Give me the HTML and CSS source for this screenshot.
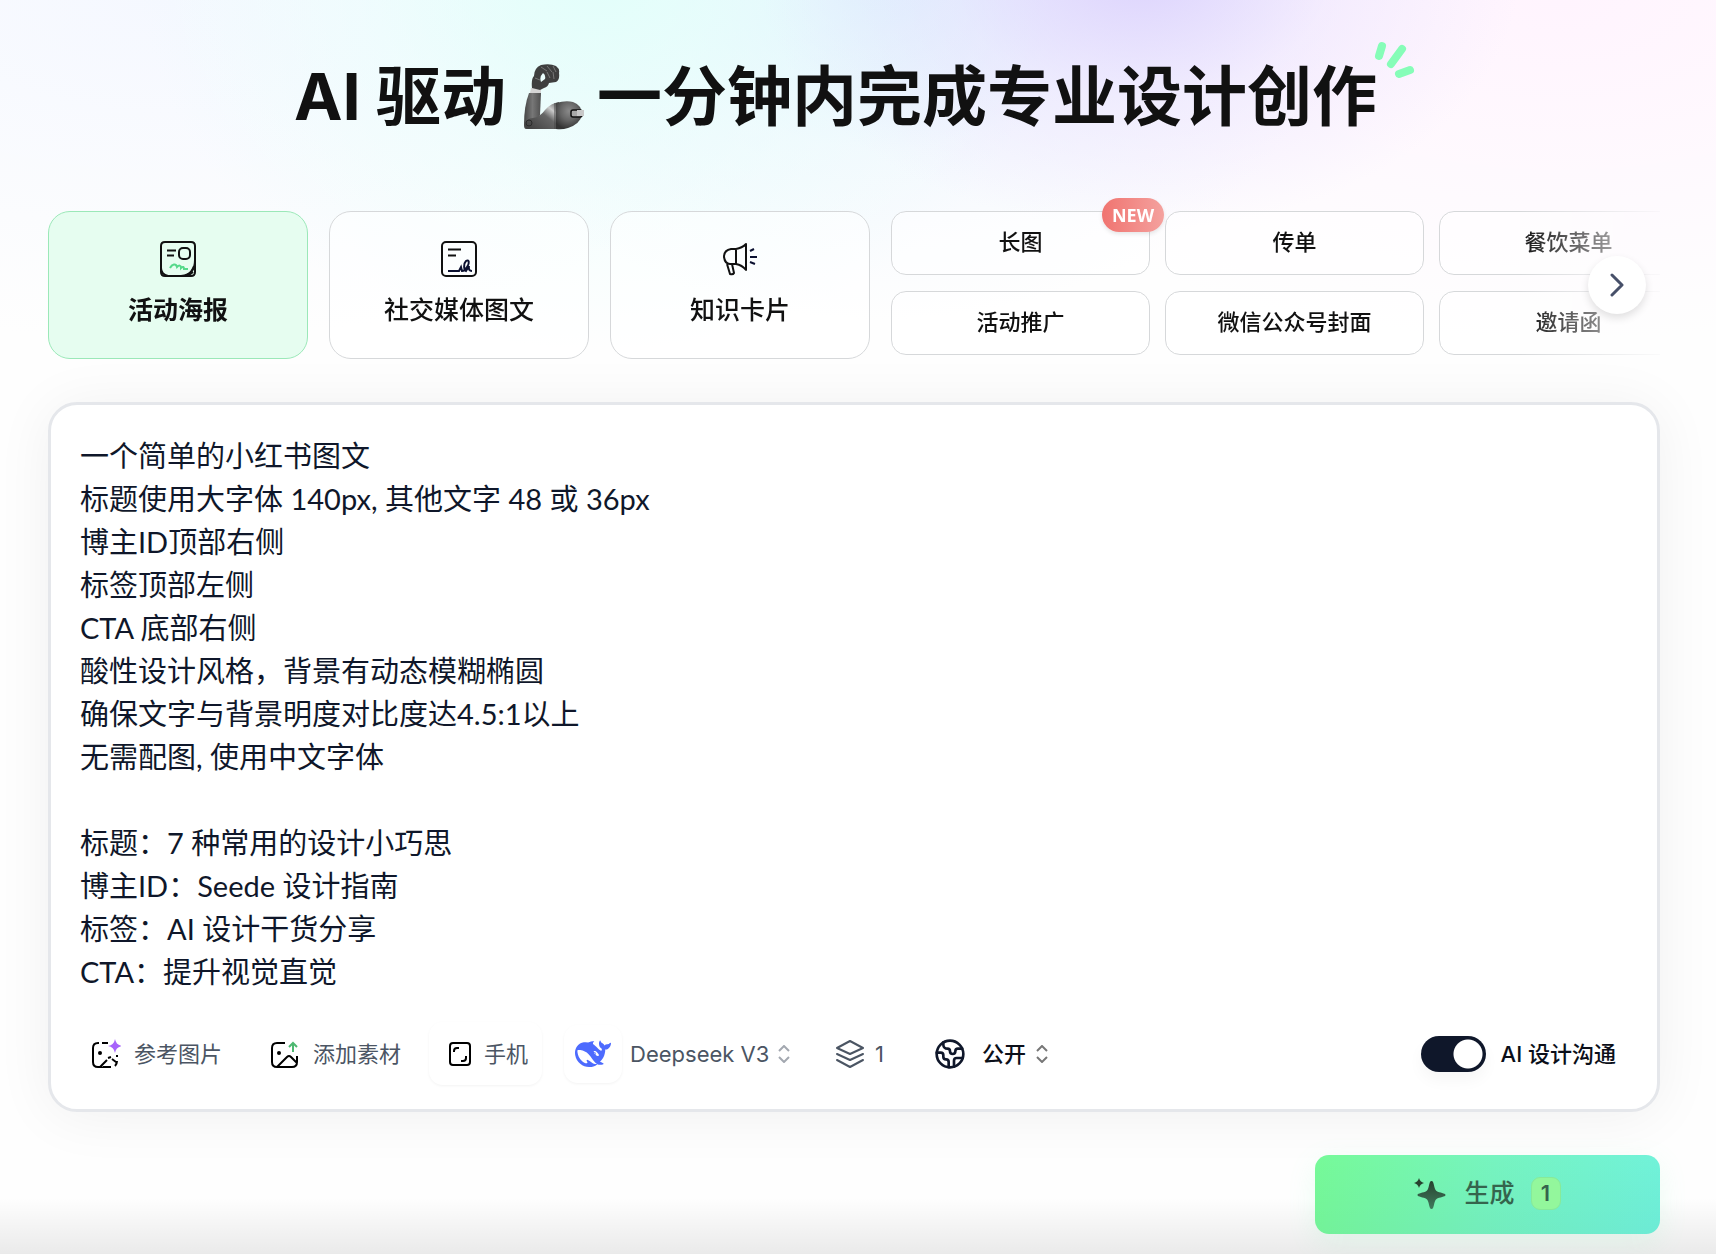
FILE: index.html
```html
<!DOCTYPE html>
<html lang="zh-CN">
<head>
<meta charset="utf-8">
<meta name="viewport" content="width=device-width, initial-scale=1">
<title>AI 驱动 一分钟内完成专业设计创作</title>
<link rel="stylesheet" href="styles.css">
</head>
<body>
<main class="page">
  <h1 class="title">
    <span>AI 驱动</span>
    <svg class="title-arm" viewBox="0 0 62 66" aria-hidden="true">
      <defs>
        <linearGradient id="fore" x1="0" x2="1" y1="0" y2="0"><stop offset="0" stop-color="#444"/><stop offset=".5" stop-color="#777"/><stop offset="1" stop-color="#505050"/></linearGradient>
        <radialGradient id="upper" cx=".5" cy=".35" r=".65"><stop offset="0" stop-color="#8a8a8a"/><stop offset=".5" stop-color="#666"/><stop offset="1" stop-color="#333"/></radialGradient>
        <linearGradient id="joint" x1="0" x2="1" y1="1" y2="0"><stop offset="0" stop-color="#3c3c3c"/><stop offset=".55" stop-color="#666"/><stop offset=".75" stop-color="#ccc"/><stop offset="1" stop-color="#555"/></linearGradient>
      </defs>
      <path d="M6 29h12l-1 22-5 14H3q-2 0-2-4Q1 42 6 29z" fill="url(#fore)"/>
      <path d="M2 61Q3 54 10 54q7-1 12-8 6-7 14-8v27H5q-3 0-3-4z" fill="url(#joint)"/>
      <path d="M33 39q10-3 17-1 9 3 9 13-2 9-14 13-6 2-12 1z" fill="url(#upper)"/>
      <rect x="48" y="46" width="11" height="7" rx="2" fill="#aaa" stroke="#111" stroke-width="1.500"/>
      <rect x="54" y="46" width="7" height="6" fill="#c8c8c8"/>
      <path d="M8 24h10v5H7z" fill="#d5d5d5"/>
      <path fill-rule="evenodd" d="M9 24Q8 15 11 12q0-8 7-11 9-2 15 1 4 3 3 7 1 7-3 9l-7 1q-1 4-5 5l-4 2zM20 9q-4 4-2 9l4-3q1-4-2-6z" fill="#3f3f3f"/>
      <path d="M18 3l6 4m0-5l5 6m1-6l3 6m-9 0l3 6m3-6l1 7M12 14l5 2" fill="none" stroke="#777" stroke-width="1"/>
      <circle cx="6" cy="59" r="3" fill="none" stroke="#2b2b2b"/>
      <path d="M32 39v26" stroke="#444"/>
    </svg>
    <span>一分钟内完成专业设计创作</span>
    <svg class="title-spark" viewBox="0 0 39 36" aria-hidden="true"><path d="M7 4L4 14M27 7L16 22M35 28l-11 4" fill="none" stroke="#86fdb8" stroke-width="8" stroke-linecap="round"/></svg>
  </h1>

  <section class="types" aria-label="设计类型">
    <div class="types-scroll">
      <button class="card card-active" type="button">
        <svg class="card-icon" viewBox="0 0 36 36" fill="none" stroke="#111" stroke-width="2" aria-hidden="true">
          <path d="M5 1h26q4 0 4 4v14c0 10-4 15-14 16H8q-7-2-7-8V5q0-4 4-4z"/><path d="M1 27v4q0 4 4 4h26q4 0 4-4V19M34 25q-2 6-7 9M33 31l-4 3"/>
          <path d="M7 9.500h9M7 14.500h7"/><rect x="19" y="7" width="11" height="11" rx="4"/>
          <path d="M10 27c2-4 6-5 7-1 2-2 4-2 4 1 2-2 3-1 3 1h4" stroke="#55d98a"/>
        </svg>
        <span>活动海报</span>
      </button>
      <button class="card" type="button">
        <svg class="card-icon" viewBox="0 0 36 36" fill="none" stroke="#111" stroke-width="2" aria-hidden="true">
          <rect x="1" y="1" width="34" height="34" rx="4"/><path d="M7 8.500h13M7 14.500h8"/>
          <path d="M7 30h11l2-4 1 4q3 0 5-4c3-4 2-8-1-6-3 3-2 9 0 10l3-5q-1 5 3 5" stroke="#0b1030"/>
        </svg>
        <span>社交媒体图文</span>
      </button>
      <button class="card" type="button">
        <svg class="card-icon" viewBox="0 0 36 36" fill="none" stroke="#111" stroke-width="2" stroke-linejoin="round" aria-hidden="true">
          <path d="M14 8H9q-7 1-7 8 1 7 6 7h6zM14 8q6-1 10-5v26q-4-5-10-6M5 23l3 10q3 1 4-1l-2-9"/><path d="M28 10l4-2M28 16h7M28 21l5 2" stroke="#0b1030"/>
        </svg>
        <span>知识卡片</span>
      </button>
      <div class="chips">
        <button class="chip" type="button">长图<span class="chip-new">NEW</span></button>
        <button class="chip" type="button">传单</button>
        <button class="chip" type="button">餐饮菜单</button>
        <button class="chip" type="button">活动推广</button>
        <button class="chip" type="button">微信公众号封面</button>
        <button class="chip" type="button">邀请函</button>
      </div>
    </div>
    <button class="next" type="button" aria-label="下一页"><svg viewBox="0 0 24 24" aria-hidden="true"><path d="M7 2l10 10L7 22" fill="none" stroke="#475069" stroke-width="3" stroke-linecap="round" stroke-linejoin="round"/></svg></button>
  </section>

  <section class="composer">
    <textarea class="prompt" rows="13" aria-label="设计描述" spellcheck="false">一个简单的小红书图文
标题使用大字体 140px, 其他文字 48 或 36px
博主ID顶部右侧
标签顶部左侧
CTA 底部右侧
酸性设计风格，背景有动态模糊椭圆
确保文字与背景明度对比度达4.5:1以上
无需配图, 使用中文字体

标题：7 种常用的设计小巧思
博主ID：Seede 设计指南
标签：AI 设计干货分享
CTA：提升视觉直觉</textarea>
    <div class="toolbar">
      <button class="tool" type="button">
        <svg class="tool-icon" viewBox="0 0 30 30" fill="none" stroke="#000" stroke-width="2" aria-hidden="true">
          <path d="M8 4H7Q2 4 2 9v14q0 5 5 5h4l-1-1 6-6M11 4h6M26 16v2M26 22q0 3-2 5M12 28h8M17 19l3-1M21 20l4 3"/><circle cx="9" cy="14" r="2" fill="#000" stroke="none"/>
          <path d="M24 0q1 6 7 7-6 1-7 7-1-6-7-7 6-1 7-7z" fill="#a763fb" stroke="none"/>
        </svg><span class="tool-text">参考图片</span></button>
      <button class="tool" type="button">
        <svg class="tool-icon" viewBox="0 0 30 30" fill="none" stroke="#000" stroke-width="2" aria-hidden="true">
          <path d="M15 4H7Q2 4 2 9v14q0 5 5 5h15q5 0 5-5v-6M7 28l10-10q2-2 4 0l6 6"/><circle cx="9" cy="14" r="2" fill="#000" stroke="none"/>
          <path d="M23 13V4M19 8l4-4 4 4" stroke="#4db871"/>
        </svg><span class="tool-text">添加素材</span></button>
      <button class="tool tool-raised" type="button">
        <svg class="tool-icon tool-icon-narrow" viewBox="0 0 22 30" fill="none" stroke="#000" stroke-width="2" aria-hidden="true">
          <rect x="1" y="4" width="20" height="22" rx="3"/><path d="M5 13v-1q0-3 3-3h2M17 17v2q0 3-3 3h-2"/>
        </svg><span class="tool-text">手机</span></button>
      <label class="picker model">
        <span class="model-logo"><svg viewBox="0 0 24 24" aria-hidden="true"><path fill="#4d6bfe" d="M23.748 4.482c-.254-.124-.364.113-.512.234-.051.039-.094.09-.137.136-.372.397-.806.657-1.373.626-.829-.046-1.537.214-2.163.848-.133-.782-.575-1.248-1.247-1.548-.352-.156-.708-.311-.955-.65-.172-.241-.219-.51-.305-.774-.055-.16-.11-.323-.293-.35-.2-.031-.278.136-.356.276-.313.572-.434 1.202-.422 1.84.027 1.436.633 2.58 1.838 3.393.137.093.172.187.129.323-.082.28-.18.552-.266.833-.055.179-.137.217-.329.14a5.526 5.526 0 01-1.736-1.18c-.857-.828-1.631-1.742-2.597-2.458a11.365 11.365 0 00-.689-.471c-.985-.957.13-1.743.388-1.836.27-.098.093-.432-.779-.428-.872.004-1.67.295-2.687.684a3.055 3.055 0 01-.465.137 9.597 9.597 0 00-2.883-.102c-1.885.21-3.39 1.102-4.497 2.623C.082 8.606-.231 10.684.152 12.85c.403 2.284 1.569 4.175 3.36 5.653 1.858 1.533 3.997 2.284 6.438 2.14 1.482-.085 3.133-.284 4.994-1.86.47.234.962.327 1.78.397.63.059 1.236-.03 1.705-.128.735-.156.684-.837.419-.961-2.155-1.004-1.682-.595-2.113-.926 1.096-1.296 2.746-2.642 3.392-7.003.05-.347.007-.565 0-.845-.004-.17.035-.237.23-.256a4.173 4.173 0 001.545-.475c1.396-.763 1.96-2.015 2.093-3.517.02-.23-.004-.467-.247-.588zM11.581 18c-2.089-1.642-3.102-2.183-3.52-2.16-.392.024-.321.471-.235.763.09.288.207.486.371.739.114.167.192.416-.113.603-.673.416-1.842-.14-1.897-.167-1.361-.802-2.5-1.86-3.301-3.307-.774-1.393-1.224-2.887-1.298-4.482-.02-.386.093-.522.477-.592a4.696 4.696 0 011.529-.039c2.132.312 3.946 1.265 5.468 2.774.868.86 1.525 1.887 2.202 2.891.72 1.066 1.494 2.082 2.48 2.914.348.292.625.514.891.677-.802.09-2.14.11-3.054-.614zm1-6.44a.306.306 0 01.415-.287.302.302 0 01.2.288.306.306 0 01-.31.307.303.303 0 01-.304-.308zm3.11 1.596c-.2.081-.399.151-.59.16a1.245 1.245 0 01-.798-.254c-.274-.23-.47-.358-.552-.758a1.73 1.73 0 01.016-.588c.07-.327-.008-.537-.239-.727-.187-.156-.426-.199-.688-.199a.559.559 0 01-.254-.078c-.11-.054-.2-.19-.114-.358.028-.054.16-.186.192-.21.356-.202.767-.136 1.146.016.352.144.618.408 1.001.782.391.451.462.576.685.914.176.265.336.537.445.848.067.195-.019.354-.25.452z"/></svg></span>
        <select aria-label="模型"><option>Deepseek V3</option></select>
        <svg class="chevrons" viewBox="0 0 12 18" aria-hidden="true"><path d="M1 6l5-5 5 5M1 12l5 5 5-5"/></svg>
      </label>
      <button class="tool tool-count" type="button">
        <svg viewBox="0 0 28 28" fill="none" stroke="#4b5563" stroke-width="2" stroke-linejoin="round" stroke-linecap="round" aria-hidden="true"><path d="M14 1l13 7-13 6L1 8zM1 14l13 6 13-6M1 20l13 7 13-7"/></svg>1</button>
      <label class="picker access">
        <svg class="globe" viewBox="0 0 24 24" fill="none" stroke="#0f172a" stroke-width="2" stroke-linecap="round" stroke-linejoin="round" aria-hidden="true"><path d="M21.540 15H17a2 2 0 0 0-2 2v4.540M7 3.340V5a3 3 0 0 0 3 3 2 2 0 0 1 2 2c0 1.100.9 2 2 2a2 2 0 0 0 2-2c0-1.100.9-2 2-2h3.170M11 21.950V18a2 2 0 0 0-2-2 2 2 0 0 1-2-2v-1a2 2 0 0 0-2-2H2.050"/><circle cx="12" cy="12" r="10"/></svg>
        <select aria-label="可见范围"><option>公开</option></select>
        <svg class="chevrons chevrons-dark" viewBox="0 0 12 18" aria-hidden="true"><path d="M1 6l5-5 5 5M1 12l5 5 5-5"/></svg>
      </label>
      <label class="switch"><input type="checkbox" role="switch" checked><span class="tool-text">AI 设计沟通</span></label>
    </div>
  </section>

  <div class="actions">
    <button class="generate" type="button">
      <svg viewBox="0 0 32 32" aria-hidden="true"><defs><linearGradient id="ink" x1="0" y1="0" x2="0" y2="1"><stop offset="0" stop-color="#27422f"/><stop offset="1" stop-color="#407a5d"/></linearGradient></defs><path fill="url(#ink)" d="M17.500 3c3 0 2 8 5 10s9 2 9 4-6 2-9 4-2 10-5 10-2-8-5-10-9-2-9-4 6-2 9-4 2-10 5-10z"/><path fill="#27422f" d="M5 0q1 4 5 5-4 1-5 5-1-4-5-5 4-1 5-5z"/></svg>
      <span class="generate-text">生成</span><span class="generate-cost">1</span>
    </button>
  </div>
</main>
</body>
</html>
```

FILE: styles.css
```css
* { box-sizing: border-box; }

body {
  margin: 0;
  min-height: 100vh;
  font-family: Inter, "Noto Sans CJK SC", sans-serif;
  color: #111;
  background:
    linear-gradient(to top, rgba(0, 0, 0, 0.08), rgba(0, 0, 0, 0) 56px),
    radial-gradient(ellipse 380px 260px at 1140px -30px, #dcd3fd, rgba(228, 219, 254, 0.4) 50%, rgba(240, 232, 255, 0)),
    radial-gradient(ellipse 460px 380px at 600px -30px, #e2fffa, rgba(230, 254, 252, 0.5) 50%, rgba(244, 255, 255, 0)),
    radial-gradient(ellipse 460px 340px at 880px -20px, #dcecfe, rgba(232, 241, 254, 0.4) 50%, rgba(240, 246, 255, 0)),
    radial-gradient(ellipse 700px 340px at 1560px 0, #fff4fe, rgba(255, 248, 255, 0)),
    radial-gradient(ellipse 700px 340px at 160px 0, #f5f8ff, rgba(247, 249, 255, 0)),
    #fefefe;
}

button, select, textarea { font: inherit; color: inherit; }
button { cursor: pointer; }

.page { padding: 48px 56px 20px 48px; }

.title {
  display: flex;
  justify-content: center;
  align-items: center;
  margin: 0 0 52px;
  font-size: 65px;
  font-weight: 700;
  line-height: 98px;
  white-space: nowrap;
}
.title-arm { width: 62px; height: 66px; margin: 0 12px 0 17px; }
.title-spark { width: 39px; height: 36px; align-self: flex-start; margin: -6px 0 0 -2px; overflow: visible; }

.types { position: relative; }
.types-scroll {
  display: flex;
  gap: 21px;
  padding-top: 13px;
  overflow: hidden;
  mask-image: linear-gradient(to right, #000 calc(100% - 140px), rgba(0, 0, 0, 0.1));
}
.card {
  flex: none;
  display: flex;
  flex-direction: column;
  align-items: center;
  gap: 15px;
  width: 260px;
  height: 148px;
  padding: 29px 0 0;
  border: 1px solid #d6d8da;
  border-radius: 22px;
  background: rgba(255, 255, 255, 0.5);
  font-size: 25px;
  line-height: 36px;
  font-weight: 500;
}
.card-active { border-color: #9be8b8; background: #e6fdf0; font-weight: 700; }
.card-icon { width: 36px; height: 36px; }

.chips {
  flex: none;
  display: grid;
  grid-template-columns: repeat(3, 259px);
  grid-auto-rows: 64px;
  gap: 16px 15px;
  height: 148px;
}
.chip {
  position: relative;
  padding: 0 0 6px;
  border: 1px solid #d6d8da;
  border-radius: 15px;
  background: rgba(255, 255, 255, 0.5);
  font-size: 22px;
  font-weight: 500;
}
.chip-new {
  position: absolute;
  top: -14px;
  right: -15px;
  width: 62px;
  height: 34px;
  border-radius: 17px;
  background: linear-gradient(to right, #f07470, #f4a19e);
  box-shadow: 0 2px 4px rgba(0, 0, 0, 0.1);
  color: #fff;
  font-family: "Open Sans", sans-serif;
  font-size: 18px;
  font-weight: 700;
  line-height: 34px;
}
.next {
  position: absolute;
  right: 14px;
  top: 58px;
  display: grid;
  place-items: center;
  width: 58px;
  height: 58px;
  padding: 0;
  border: 0;
  border-radius: 50%;
  background: #fff;
  box-shadow: 0 4px 8px rgba(0, 0, 0, 0.12);
}
.next svg { width: 24px; height: 24px; }

.composer {
  margin-top: 43px;
  padding: 29px 29px 24px;
  border: 3px solid #e5e7eb;
  border-radius: 29px;
  background: #fff;
  box-shadow: 0 4px 58px rgba(0, 0, 0, 0.06);
}
.prompt {
  display: block;
  width: 100%;
  padding: 0;
  border: 0;
  outline: 0;
  resize: none;
  overflow: hidden;
  background: none;
  color: #0f172a;
  font-family: Lato, "Noto Sans CJK SC", sans-serif;
  font-size: 29px;
  line-height: 43px;
}
.toolbar {
  display: flex;
  align-items: center;
  gap: 14px;
  margin: 29px 12px 0 -9px;
  color: #4b5563;
  font-size: 22px;
}
.tool {
  display: flex;
  align-items: center;
  gap: 13px;
  height: 63px;
  padding: 0 14px 0 20px;
  border: 0;
  border-radius: 14px;
  background: none;
}
.tool-text { padding-bottom: 4px; }
.tool-icon { width: 30px; height: 30px; }
.tool-icon-narrow { width: 22px; }
.tool-raised { box-shadow: 0 1px 3px rgba(0, 0, 0, 0.05); }

.picker { display: flex; align-items: center; }
.picker select {
  appearance: none;
  padding: 0;
  border: 0;
  outline: 0;
  background: none;
}
.model { gap: 8px; margin-left: 8px; }
.model-logo {
  display: grid;
  place-items: center;
  width: 58px;
  height: 58px;
  border-radius: 14px;
  box-shadow: 0 1px 3px rgba(0, 0, 0, 0.05);
}
.model-logo svg { width: 36px; height: 36px; }
.chevrons { width: 12px; height: 18px; fill: none; stroke: #a3a8b0; stroke-width: 2; }
.chevrons-dark { stroke: #777; }
.tool-count { margin-left: 12px; gap: 11px; }
.tool-count svg { width: 28px; height: 28px; }
.access { gap: 9px; margin-left: 22px; color: #0b0f19; font-weight: 500; }
.globe { width: 32px; height: 32px; margin-right: 7px; }

.switch {
  display: flex;
  align-items: center;
  gap: 15px;
  margin-left: auto;
  color: #0b0f19;
  font-weight: 500;
}
.switch input {
  appearance: none;
  width: 65px;
  height: 36px;
  margin: 0;
  border-radius: 18px;
  background: radial-gradient(circle at 47px 18px, #fff 14px, #0f172a 15px);
  box-shadow: 0 8px 16px rgba(0, 0, 0, 0.04);
}

.actions { display: flex; justify-content: flex-end; margin-top: 43px; }
.generate {
  display: flex;
  align-items: center;
  justify-content: center;
  width: 345px;
  height: 79px;
  padding: 0 0 2px;
  border: 0;
  border-radius: 14px;
  background:
    linear-gradient(to top, rgba(0, 0, 0, 0.03), rgba(0, 0, 0, 0)),
    linear-gradient(105deg, #76fa98, #76f4c0 50%, #70f2dc);
  box-shadow: 0 8px 28px rgba(118, 245, 180, 0.14);
  color: #35644d;
  font-size: 25px;
  font-weight: 500;
}
.generate svg { width: 32px; height: 32px; margin-right: 18px; }
.generate-text { padding-bottom: 6px; }
.generate-cost {
  width: 30px;
  height: 33px;
  margin-left: 16px;
  border: 1px solid #87ea99;
  border-radius: 9px;
  background: #93f79c;
  font-size: 22px;
  font-weight: 600;
  line-height: 31px;
}
```
